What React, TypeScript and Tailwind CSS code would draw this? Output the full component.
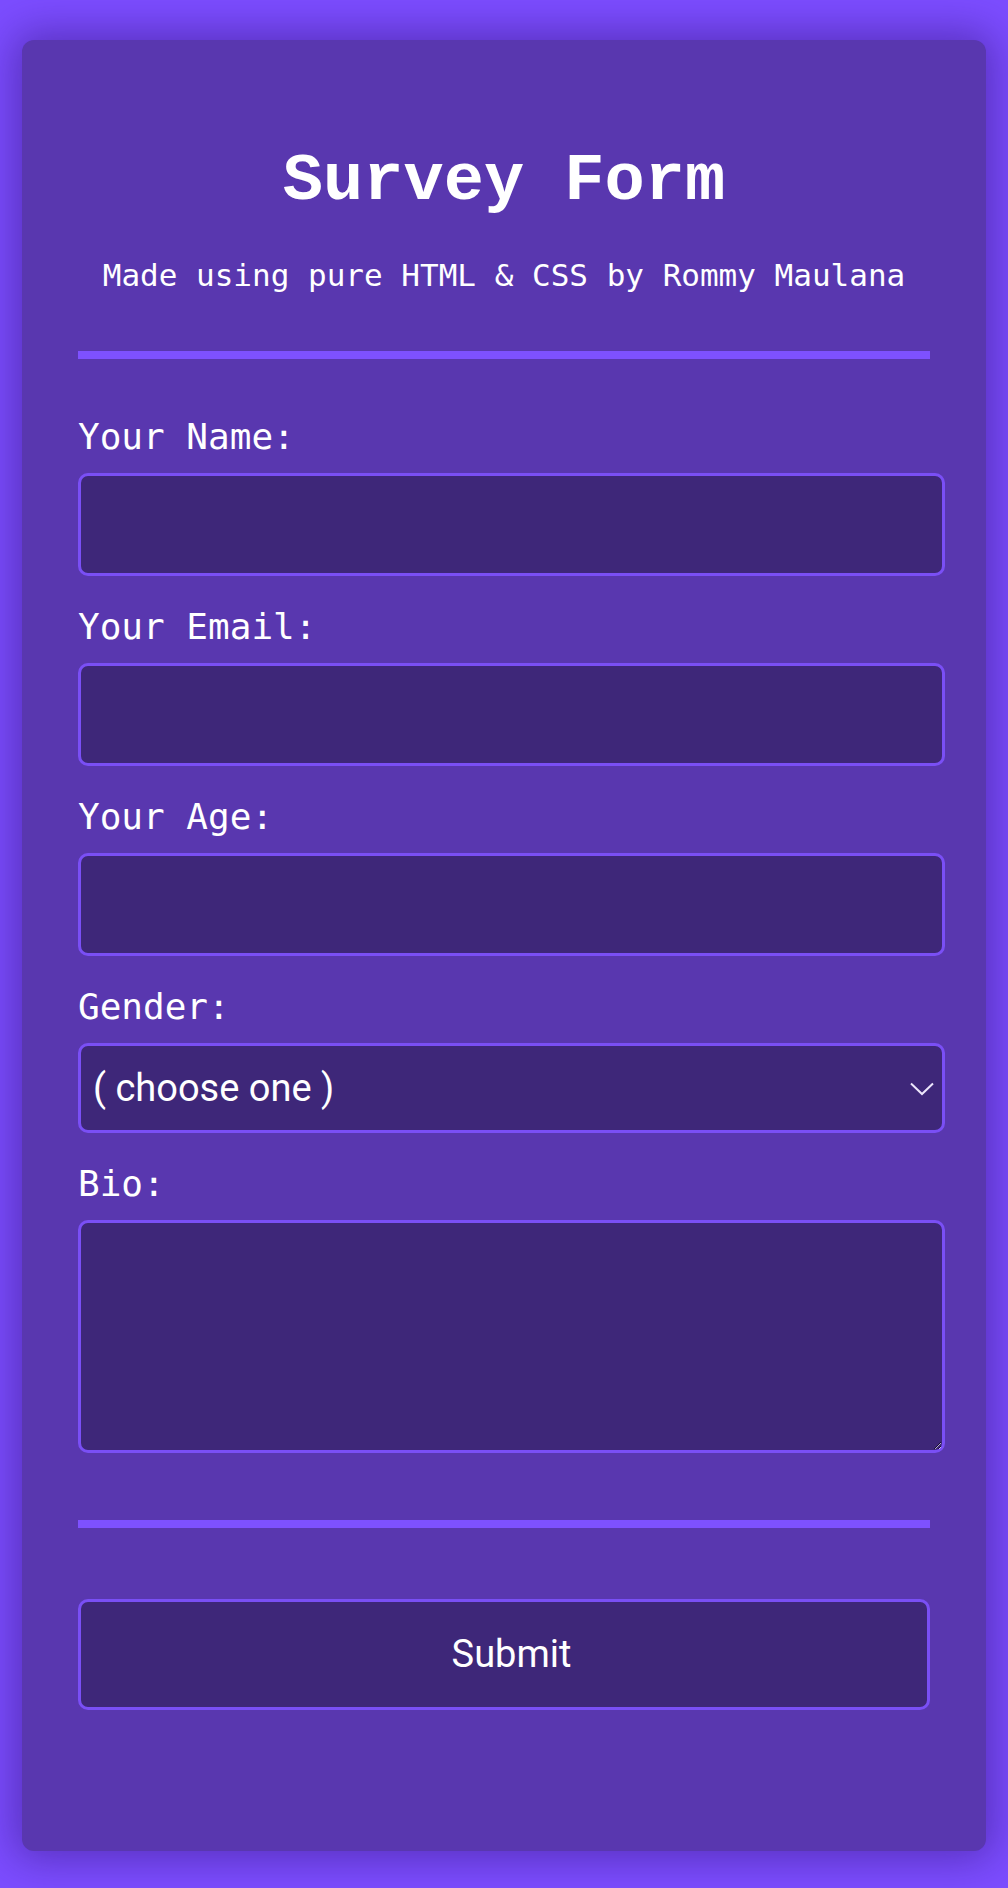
export default function App() {
  const fields = ["Your Name:", "Your Email:", "Your Age:"];

  return (
    <div className="min-h-screen bg-[#7c4dff] pt-[40px] pb-[37px] px-[22px]">
      <div className="rounded-[12px] bg-[#5937af] shadow-[0_0_40px_8px_rgba(45,15,110,0.45)] px-[56px] pt-[108px] pb-[141px]">
        <h1 className="text-center text-white font-bold text-[67px] leading-none font-['Liberation_Mono',monospace]">
          Survey Form
        </h1>
        <p className="mt-[45px] text-center text-white text-[31px] leading-none font-['DejaVu_Sans_Mono',monospace]">
          Made using pure HTML &amp; CSS by Rommy Maulana
        </p>
        <div className="mt-[60px] h-[8px] bg-[#7e51ff]" />

        <form className="mt-[57px] flex flex-col font-['DejaVu_Sans_Mono',monospace] text-white">
          {fields.map((label) => (
            <div key={label} className="mb-[30px]">
              <label className="block h-[42px] text-[36px] leading-[42px]">{label}</label>
              <input
                type="text"
                className="mt-[15px] block w-[calc(100%+15px)] h-[103px] rounded-[10px] border-[3px] border-[#7a4ff5] bg-[#3e2779] outline-none"
              />
            </div>
          ))}

          <div className="mb-[30px]">
            <label className="block h-[42px] text-[36px] leading-[42px]">Gender:</label>
            <div className="relative mt-[15px] w-[calc(100%+15px)]">
              <select className="block w-full h-[90px] appearance-none rounded-[10px] border-[3px] border-[#7a4ff5] bg-[#3e2779] pl-[12px] text-[38px] text-white outline-none font-['Roboto',sans-serif]">
                <option>( choose one )</option>
              </select>
              <svg
                className="pointer-events-none absolute right-[11px] top-[39px]"
                width="24"
                height="14"
                viewBox="0 0 24 14"
                fill="none"
              >
                <path d="M1 1.5 L12 12 L23 1.5" stroke="#ece6fb" strokeWidth="2" />
              </svg>
            </div>
          </div>

          <div>
            <label className="block h-[42px] text-[36px] leading-[42px]">Bio:</label>
            <textarea className="mt-[15px] block w-[calc(100%+15px)] h-[233px] rounded-[10px] border-[3px] border-[#7a4ff5] bg-[#3e2779] outline-none" />
          </div>

          <div className="mt-[67px] h-[8px] bg-[#7e51ff]" />

          <button
            type="button"
            className="mt-[71px] h-[111px] w-full rounded-[10px] border-[3px] border-[#7a4ff5] bg-[#3e2779] pl-[15px] text-[38px] text-white font-['Roboto',sans-serif]"
          >
            Submit
          </button>
        </form>
      </div>
    </div>
  );
}
